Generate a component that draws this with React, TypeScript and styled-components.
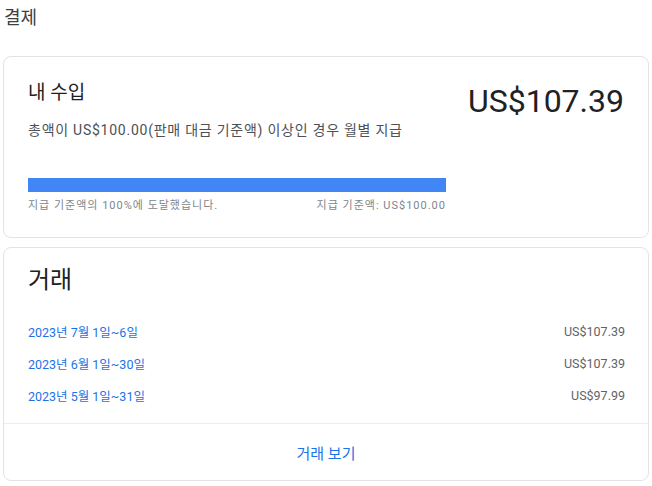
import React from 'react';
import styled, {createGlobalStyle} from 'styled-components';

const Global = createGlobalStyle`
  body {
    margin: 0;
    background: white;
    font-family: Roboto, "Noto Sans CJK KR", sans-serif;
    color: #202124;
  }
`;

const Page = styled.div`
  padding: 6px 3px 0;
`;

const PageTitle = styled.h1`
  margin: 0 0 26px 1px;
  font-size: 18px;
  line-height: 24px;
  font-weight: 400;
  color: #3c4043;
`;

const Card = styled.section`
  border: 1px solid #e3e3e3;
  border-radius: 8px;
  background: white;
  & + & {
    margin-top: 9px;
  }
`;

const Earnings = styled.div`
  padding: 24px 24px 23px;
`;

const Top = styled.div`
  display: flex;
  justify-content: space-between;
  align-items: flex-start;
`;

const Label = styled.h2`
  margin: 0;
  font-size: 19px;
  line-height: 24px;
  font-weight: 400;
`;

const Note = styled.p`
  margin: 15px 0 0;
  font-size: 14px;
  line-height: 20px;
  letter-spacing: 0.75px;
  color: #4d5156;
`;

const Amount = styled.div`
  font-size: 32px;
  line-height: 40px;
  color: #202124;
`;

const Progress = styled.div`
  margin-top: 38px;
  width: 418px;
`;

const Track = styled.div`
  height: 14px;
  background: #e8eaed;
`;

const Fill = styled.div`
  height: 100%;
  background: #4285f4;
`;

const Caption = styled.div`
  display: flex;
  justify-content: space-between;
  margin-top: 6px;
  font-size: 11px;
  line-height: 16px;
  letter-spacing: 1px;
  color: #80868b;
`;

const Heading = styled.h2`
  margin: 0;
  padding: 18px 24px 0;
  font-size: 24px;
  line-height: 28px;
  font-weight: 400;
`;

const List = styled.div`
  padding: 21px 23px 12px 24px;
  border-bottom: 1px solid #ececec;
`;

const Row = styled.div`
  display: flex;
  justify-content: space-between;
  align-items: center;
  height: 32px;
  font-size: 12.5px;
`;

const Period = styled.a`
  color: #1a73e8;
  text-decoration: none;
`;

const Sum = styled.span`
  color: #5f6368;
`;

const Footer = styled.a`
  display: flex;
  justify-content: center;
  align-items: center;
  height: 56px;
  font-size: 15px;
  color: #1a73e8;
  text-decoration: none;
`;

const rows = [
  {period: '2023년 7월 1일~6일', sum: 'US$107.39'},
  {period: '2023년 6월 1일~30일', sum: 'US$107.39'},
  {period: '2023년 5월 1일~31일', sum: 'US$97.99'},
];

function App() {
  const percent = 100;
  return (
    <Page>
      <Global/>
      <PageTitle>결제</PageTitle>
      <Card>
        <Earnings>
          <Top>
            <div>
              <Label>내 수입</Label>
              <Note>총액이 US$100.00(판매 대금 기준액) 이상인 경우 월별 지급</Note>
            </div>
            <Amount>US$107.39</Amount>
          </Top>
          <Progress>
            <Track>
              <Fill style={{width: `${percent}%`}}/>
            </Track>
            <Caption>
              <span>지급 기준액의 100%에 도달했습니다.</span>
              <span>지급 기준액: US$100.00</span>
            </Caption>
          </Progress>
        </Earnings>
      </Card>
      <Card>
        <Heading>거래</Heading>
        <List>
          {rows.map(r =>
            <Row key={r.period}>
              <Period href="#">{r.period}</Period>
              <Sum>{r.sum}</Sum>
            </Row>
          )}
        </List>
        <Footer href="#">거래 보기</Footer>
      </Card>
    </Page>
  );
}

export default App;
